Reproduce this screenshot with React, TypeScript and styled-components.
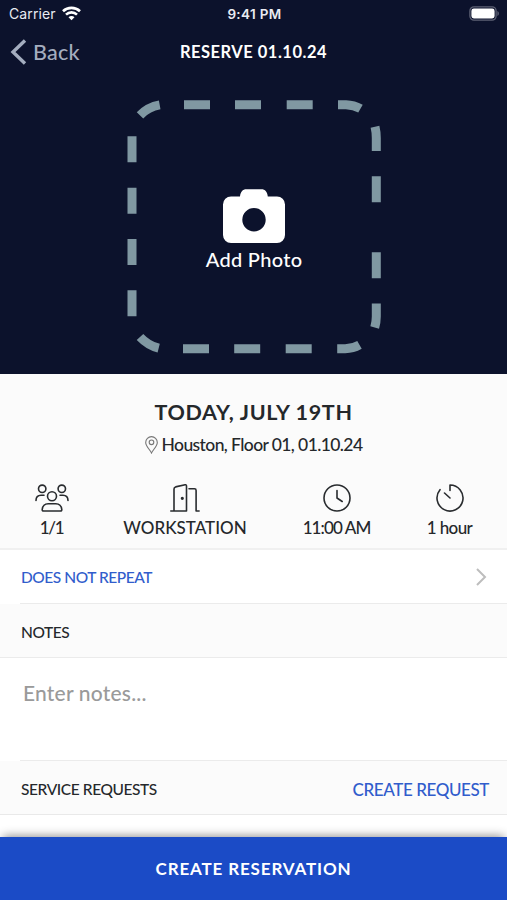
import React from "react";
import styled, { createGlobalStyle } from "styled-components";

const GlobalStyle = createGlobalStyle`
  * { box-sizing: border-box; }
  body { margin: 0; background: #fff; }
`;

const Screen = styled.div`
  width: 507px;
  height: 900px;
  overflow: hidden;
  display: flex;
  flex-direction: column;
  background: #fff;
  color: #25282b;
  font-family: Lato, "Open Sans", sans-serif;
  font-weight: 500;
  white-space: nowrap;
`;

const Hero = styled.header`
  height: 374px;
  flex: none;
  background: #0c122c;
  color: #fff;
  display: flex;
  flex-direction: column;
`;

const StatusBar = styled.div`
  height: 27px;
  padding: 0 7px 0 9px;
  display: grid;
  grid-template-columns: 1fr auto 1fr;
  align-items: center;
  font-family: Inter, sans-serif;
  color: #e9ebf2;
  svg { display: block; }
`;

const Carrier = styled.div`
  display: flex;
  align-items: center;
  gap: 6px;
  font-size: 14px;
  font-weight: 400;
  letter-spacing: 0.1px;
`;

const Clock = styled.div`
  font-size: 13.5px;
  font-weight: 600;
  letter-spacing: 0.35px;
`;

const BatterySlot = styled.div`
  justify-self: end;
`;

const NavBar = styled.nav`
  height: 49px;
  padding: 0 10px;
  display: grid;
  grid-template-columns: 1fr auto 1fr;
  align-items: center;
`;

const BackButton = styled.a`
  display: flex;
  align-items: center;
  gap: 6px;
  color: #a4adbf;
  font-size: 21.5px;
  letter-spacing: 0.2px;
`;

const NavTitle = styled.h1`
  margin: 0;
  font-size: 16.5px;
  font-weight: 700;
  letter-spacing: 0.5px;
`;

const PhotoDrop = styled.button`
  position: relative;
  width: 254px;
  height: 254px;
  margin: 24px auto 0 127px;
  padding: 89px 0 0;
  border: 0;
  background: none;
  color: #fff;
  font: 500 20px/26px Lato, sans-serif;
  letter-spacing: 0.3px;
  display: flex;
  flex-direction: column;
  align-items: center;
  justify-content: flex-start;
  gap: 3px;
`;

const DashFrame = styled.svg`
  position: absolute;
  inset: 0;
`;

const Summary = styled.section`
  height: 176px;
  flex: none;
  background: #fbfbfb;
  border-bottom: 2px solid #f0f0f0;
  display: flex;
  flex-direction: column;
`;

const DateTitle = styled.h2`
  margin: 24px 0 0;
  text-align: center;
  font-size: 21.5px;
  line-height: 28px;
  font-weight: 700;
  letter-spacing: 0.65px;
`;

const Location = styled.div`
  margin-top: 7px;
  display: flex;
  justify-content: center;
  align-items: center;
  gap: 4px;
  font-size: 17.5px;
  line-height: 24px;
  letter-spacing: -0.6px;
`;

const Stats = styled.div`
  margin-top: 27px;
  display: grid;
  grid-template-columns: 103px 164px 139px 87px;
`;

const Stat = styled.div<{ $spacing?: number }>`
  display: flex;
  flex-direction: column;
  align-items: center;
  gap: 4px;
  font-size: 17px;
  line-height: 24px;
  letter-spacing: ${(p) => p.$spacing ?? 0}px;
  svg { display: block; }
`;

const RepeatRow = styled.a`
  height: 53px;
  flex: none;
  padding: 0 20px 0 21px;
  display: flex;
  align-items: center;
  justify-content: space-between;
  color: #315dcc;
  font-size: 15.5px;
  line-height: 20px;
  letter-spacing: -0.45px;
`;

const InsetLine = styled.div`
  height: 1px;
  flex: none;
  margin-left: 20px;
  background: #ebebeb;
`;

const SectionHeader = styled.div<{ $line: string }>`
  height: 54px;
  flex: none;
  padding: 3px 18px 0 21px;
  background: #fbfbfb;
  border-bottom: 1px solid ${(p) => p.$line};
  display: flex;
  align-items: center;
  justify-content: space-between;
  font-size: 15.5px;
  letter-spacing: -0.4px;
`;

const CreateLink = styled.a`
  color: #315dcc;
  font-size: 17px;
`;

const NotesField = styled.div`
  height: 102px;
  flex: none;
  padding: 21px 23px;
  color: #9a9a9a;
  font-size: 21px;
  line-height: 28px;
  letter-spacing: 0.2px;
`;

const FooterButton = styled.button`
  height: 63px;
  flex: none;
  margin-top: auto;
  border: 0;
  background: #1b4bc6;
  color: #fff;
  box-shadow: 0 -4px 9px -3px rgba(0, 0, 0, 0.45);
  font: 700 17px/24px Lato, sans-serif;
  letter-spacing: 0.85px;
`;

const line = {
  fill: "none",
  stroke: "#292c2f",
  strokeWidth: 1.6,
  strokeLinecap: "round" as const,
  strokeLinejoin: "round" as const,
};

const WifiIcon = () => (
  <svg width="19" height="15" viewBox="0 0 19 15" fill="none" stroke="#fff" strokeWidth="2.6">
    <path d="M1 5.2C5.7.7 13.3.7 18 5.2" />
    <path d="M4 8.6c3.1-3 7.9-3 11 0" />
    <path d="M9.5 14.3 6.5 11.200c1.600-1.600 4.400-1.600 6 0z" fill="#fff" stroke="none" />
  </svg>
);

const BatteryIcon = () => (
  <svg width="31" height="15" viewBox="0 0 31 15">
    <rect x=".9" y=".9" width="26.2" height="13.2" rx="4" fill="none" stroke="#5d6174" strokeWidth="1.3" />
    <rect x="2.4" y="2.6" width="23.2" height="9.8" rx="2.4" fill="#fff" />
    <path d="M28.4 5c2 .7 2 4.300 0 5z" fill="#5d6174" />
  </svg>
);

const BackIcon = () => (
  <svg width="17" height="26" viewBox="0 0 17 26" fill="none" stroke="#a4adbf" strokeWidth="3.4">
    <path d="M15 1.500 3 13l12 11.500" />
  </svg>
);

const CameraIcon = () => (
  <svg width="62" height="54" viewBox="0 0 62 54" fill="#fff">
    <path
      fillRule="evenodd"
      d="M8 7.500h9C17.500 3 19.500.3 23.500.3h14.800c4 0 6 2.700 6.500 7.200H54a8 8 0 0 1 8 8V46a8 8 0 0 1-8 8H8a8 8 0 0 1-8-8V15.500a8 8 0 0 1 8-8zM31 19a11.700 11.700 0 1 0 0 23.400A11.700 11.700 0 0 0 31 19z"
    />
  </svg>
);

const PinIcon = () => (
  <svg width="13" height="18" viewBox="0 0 13 18" fill="none" stroke="#777" strokeWidth="1.1">
    <path d="M6.500 17C5 13.700.7 10.200.7 6.400a5.800 5.800 0 0 1 11.600 0C12.300 10.200 8 13.700 6.500 17z" />
    <circle cx="6.500" cy="6.300" r="2.300" />
  </svg>
);

const PeopleIcon = () => (
  <svg width="34" height="28" viewBox="0 0 34 28" {...line}>
    <circle cx="7.200" cy="4.800" r="3.700" />
    <circle cx="26.800" cy="4.800" r="3.700" />
    <circle cx="17" cy="12.300" r="4.500" />
    <path d="M1 16.500c0-3.500 2.200-5.300 5-5.300h3M33 16.500c0-3.500-2.200-5.300-5-5.300h-3M8.600 27H25.400c1 0 1.500-.6 1.400-1.400-.4-3.500-2.600-5.800-6-5.800h-7.600c-3.400 0-5.600 2.300-6 5.800-.1.800.4 1.400 1.400 1.400z" />
  </svg>
);

const DoorIcon = () => (
  <svg width="30" height="28" viewBox="0 0 30 28" {...line}>
    <path d="M.8 27H16.500V2c0-.9-.5-1.400-1.400-1.200L5.600 2.900C4.500 3.200 4 3.700 4 4.900V27M19 4.800h5.500c1 0 1.600.6 1.600 1.600V27h3" />
    <circle cx="12.300" cy="14.300" r=".8" fill="#292c2f" />
  </svg>
);

const ClockIcon = () => (
  <svg width="28" height="28" viewBox="0 0 28 28" {...line}>
    <circle cx="14" cy="14" r="13" />
    <path d="M14 6.500V14l5.200 3.500" />
  </svg>
);

const TimerIcon = () => (
  <svg width="28" height="28" viewBox="0 0 28 28" {...line}>
    <path d="M14 6.500V1A13 13 0 1 1 4 5.700M8.500 9l5.500 5" />
  </svg>
);

const ChevronIcon = () => (
  <svg width="12" height="18" viewBox="0 0 12 18" fill="none" stroke="#bdbdbd" strokeWidth="2">
    <path d="m2 1 8 8-8 8" />
  </svg>
);

export default function App() {
  return (
    <>
      <GlobalStyle />
      <Screen>
        <Hero>
          <StatusBar>
            <Carrier>
              Carrier
              <WifiIcon />
            </Carrier>
            <Clock>9:41 PM</Clock>
            <BatterySlot>
              <BatteryIcon />
            </BatterySlot>
          </StatusBar>
          <NavBar>
            <BackButton>
              <BackIcon />
              Back
            </BackButton>
            <NavTitle>RESERVE 01.10.24</NavTitle>
          </NavBar>
          <PhotoDrop>
            <DashFrame width="254" height="254" viewBox="127 100 254 254" fill="none" stroke="#8098a2" strokeWidth="9">
              <path d="M184 104.700h26M235 104.700h26M286.700 104.700h26M183 348.700h26M234.200 348.700h26M285.700 348.700h26" />
              <path d="M132 136.300v26M132 187.700v26M132 239v26M132 290.300v26M376.300 176.300v26M376.300 252.300v26" />
              <path d="M140 115.300Q148 107 159.700 104.900M338 104.700h8Q354 105 360.500 108.700M375 126.700Q376.300 132 376.300 138v13" />
              <path d="M376.300 303.500v13Q376.300 322 374.700 327.500M337.200 348.700h8Q353 348.500 359.500 344.800M140 337Q148 345.500 158.700 348.200" />
            </DashFrame>
            <CameraIcon />
            Add Photo
          </PhotoDrop>
        </Hero>

        <Summary>
          <DateTitle>TODAY, JULY 19TH</DateTitle>
          <Location>
            <PinIcon />
            Houston, Floor 01, 01.10.24
          </Location>
          <Stats>
            <Stat $spacing={-1.3}>
              <PeopleIcon />
              1/1
            </Stat>
            <Stat>
              <DoorIcon />
              WORKSTATION
            </Stat>
            <Stat $spacing={-0.9}>
              <ClockIcon />
              11:00 AM
            </Stat>
            <Stat $spacing={-0.6}>
              <TimerIcon />1 hour
            </Stat>
          </Stats>
        </Summary>

        <RepeatRow>
          DOES NOT REPEAT
          <ChevronIcon />
        </RepeatRow>
        <InsetLine />
        <SectionHeader $line="#ebebeb">NOTES</SectionHeader>
        <NotesField>Enter notes...</NotesField>
        <InsetLine />
        <SectionHeader $line="#e9e9e9">
          SERVICE REQUESTS
          <CreateLink>CREATE REQUEST</CreateLink>
        </SectionHeader>
        <FooterButton>CREATE RESERVATION</FooterButton>
      </Screen>
    </>
  );
}
